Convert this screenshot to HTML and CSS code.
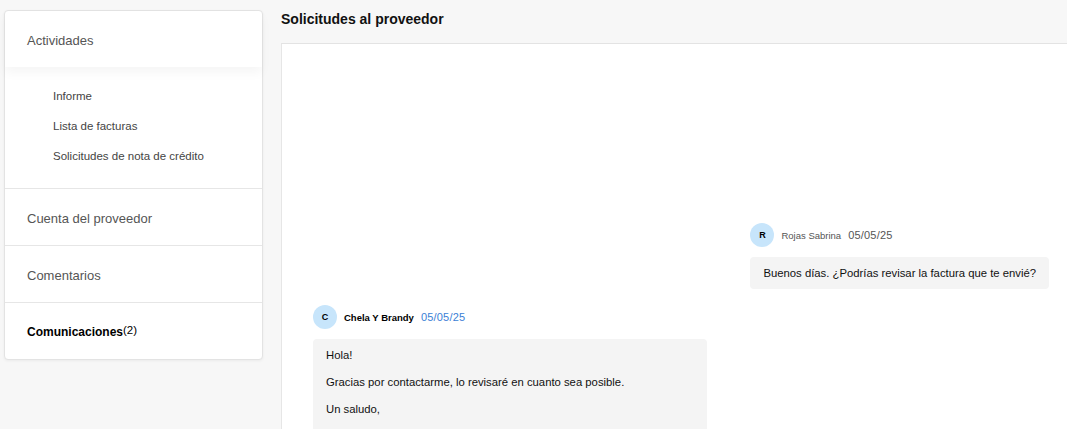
FILE: index.html
```html
<!DOCTYPE html>
<html lang="es">
<head>
  <meta charset="UTF-8">
  <title>Solicitudes al proveedor</title>
  <link rel="stylesheet" href="styles.css">
</head>
<body>
  <div class="page">
    <aside class="sidebar">
      <div class="section section-open">
        <div class="section-title">Actividades</div>
      </div>
      <ul class="sublist">
        <li>Informe</li>
        <li>Lista de facturas</li>
        <li>Solicitudes de nota de crédito</li>
      </ul>
      <div class="section">
        <div class="section-title">Cuenta del proveedor</div>
      </div>
      <div class="section">
        <div class="section-title">Comentarios</div>
      </div>
      <div class="section">
        <div class="section-title active">Comunicaciones<span class="count">(2)</span></div>
      </div>
    </aside>

    <main class="main">
      <h1 class="title">Solicitudes al proveedor</h1>
      <div class="panel">
        <div class="msg msg-right">
          <div class="meta">
            <span class="avatar">R</span>
            <span class="name">Rojas Sabrina</span>
            <span class="date">05/05/25</span>
          </div>
          <div class="bubble">
            <p>Buenos días. ¿Podrías revisar la factura que te envié?</p>
          </div>
        </div>

        <div class="msg msg-left">
          <div class="meta">
            <span class="avatar">C</span>
            <span class="name name-me">Chela Y Brandy</span>
            <span class="date date-me">05/05/25</span>
          </div>
          <div class="bubble bubble-wide">
            <p>Hola!</p>
            <p>Gracias por contactarme, lo revisaré en cuanto sea posible.</p>
            <p>Un saludo,</p>
          </div>
        </div>
      </div>
    </main>
  </div>
</body>
</html>
```
FILE: styles.css
```css
body { margin: 0; background: #f7f7f7; font-family: "Liberation Sans", Arial, sans-serif; color: #111; overflow: hidden; }
.page { display: flex; gap: 18px; height: 429px; }

.sidebar { margin: 10px 0 0 4px; width: 257px; align-self: flex-start; background: #fff; border: 1px solid #e3e3e3; border-radius: 4px; box-shadow: 0 1px 3px rgba(0,0,0,0.05); }
.section { display: flex; align-items: center; padding: 2px 22px 0; box-sizing: border-box; height: 57px; border-top: 1px solid #e6e6e6; }
.section-open { border-top: none; height: 56px; position: relative; box-shadow: 0 6px 10px rgba(0,0,0,0.04); }
.section-title { font-size: 13px; color: #555; }
.section-title.active { font-weight: bold; color: #000; font-size: 12px; }
.count { font-weight: normal; font-size: 11.5px; position: relative; top: -2px; }
.sublist { list-style: none; margin: 0; padding: 14px 0 17px 48px; }
.sublist li { height: 30px; line-height: 30px; font-size: 11.5px; color: #444; }

.main { flex: 1; display: flex; flex-direction: column; min-height: 0; }
.title { margin: 0; height: 38px; line-height: 38px; font-size: 14px; font-weight: bold; color: #111; }
.panel { flex: 1; min-height: 0; margin-top: 5px; background: #fff; border-top: 1px solid #e3e3e3; border-left: 1px solid #e6e6e6; padding: 179px 18px 0 31px; display: flex; flex-direction: column; overflow: hidden; }

.msg { display: flex; flex-direction: column; gap: 10px; flex-shrink: 0; }
.msg-right { align-self: flex-end; }
.msg-left { align-self: flex-start; margin-top: 16px; }
.meta { display: flex; align-items: center; height: 24px; }
.avatar { width: 24px; height: 24px; border-radius: 50%; background: #c7e5fb; font-size: 9px; font-weight: bold; color: #000; display: flex; align-items: center; justify-content: center; margin-right: 7px; }
.name { font-size: 9.5px; color: #555; margin-right: 7px; }
.name-me { color: #000; font-weight: bold; }
.date { font-size: 11px; color: #555; letter-spacing: 0.2px; }
.date-me { color: #3b7fd6; }
.bubble { background: #f4f4f4; border-radius: 4px; padding: 9px 13px; font-size: 11.3px; }
.bubble p { margin: 0; line-height: 14px; }
.bubble p + p { margin-top: 13px; }
.bubble-wide { width: 368px; padding-bottom: 24px; }
```
